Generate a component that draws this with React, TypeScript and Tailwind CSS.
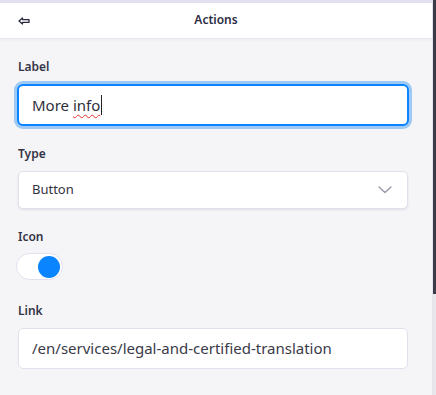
import React from 'react';

function BackArrow() {
  return (
    <svg width="12" height="8" viewBox="0 0 12 8" fill="none">
      <path
        d="M1 4 L4.5 1 V2.6 H11 V5.4 H4.5 V7 Z"
        stroke="#2b2b40"
        strokeWidth="1.3"
        strokeLinejoin="round"
        fill="white"
      />
    </svg>
  );
}

function Chevron() {
  return (
    <svg width="14" height="8" viewBox="0 0 14 8" fill="none">
      <path d="M1 1 L7 6.5 L13 1" stroke="#9a99a8" strokeWidth="1.4" strokeLinecap="round" strokeLinejoin="round" />
    </svg>
  );
}

function Field({ label, children }: { label: string; children: React.ReactNode }) {
  return (
    <div className="flex flex-col">
      <span className="text-[12px] font-semibold text-[#343446] leading-5 mb-[7px]">{label}</span>
      {children}
    </div>
  );
}

export default function App() {
  return (
    <div
      className="w-[436px] h-[395px] flex bg-[#f5f5f8] overflow-hidden"
      style={{ fontFamily: '"Noto Sans", "Open Sans", sans-serif' }}
    >
      <div className="w-[433px] flex flex-col border-r border-[#e6e5ee]">
        <div className="h-[3px] bg-[#e2e0ef]" />
        <div className="h-[36px] bg-white flex items-center relative border-b border-[#e9e8f0] shadow-[0_1px_2px_rgba(0,0,0,0.04)]">
          <div className="absolute left-[18px] top-[14px]">
            <BackArrow />
          </div>
          <span className="flex-1 text-center text-[12px] font-semibold text-[#2c2c42] -mt-[1px]">Actions</span>
        </div>
        <div className="flex flex-col pl-[18px] pr-[24px] pt-[18px]">
          <Field label="Label">
            <div className="h-[42px] -mx-[1px] rounded-[6px] border-2 border-[#0a84ff] bg-white ring-[3px] ring-[#9ec9f5] flex items-center px-[13px]">
              <span className="text-[15px] text-[#2f2f3c]">
                More{' '}
                <span className="underline decoration-wavy decoration-[#e0302a] decoration-1 underline-offset-[3px]">info</span>
              </span>
              <span className="w-px h-[20px] bg-[#222] ml-[1px]" />
            </div>
          </Field>
          <div className="h-[18px]" />
          <Field label="Type">
            <div className="h-[38px] rounded-[5px] border border-[#e2e0ec] bg-white shadow-[0_1px_2px_rgba(60,60,90,0.12)] flex items-center justify-between pl-[13px] pr-[15px]">
              <span className="text-[13px] text-[#33333f]">Button</span>
              <Chevron />
            </div>
          </Field>
          <div className="h-[18px]" />
          <Field label="Icon">
            <div className="w-[47px] h-[27px] -ml-[2px] -mt-[1px] rounded-full bg-white border border-[#e2e0ef] flex items-center justify-end pr-[2px]">
              <div className="w-[22px] h-[22px] rounded-full bg-[#0a84ff]" />
            </div>
          </Field>
          <div className="h-[21px]" />
          <Field label="Link">
            <div className="h-[41px] rounded-[5px] border border-[#e2e0ec] bg-white flex items-center px-[13px]">
              <span className="text-[15px] text-[#3a3a48]">/en/services/legal-and-certified-translation</span>
            </div>
          </Field>
        </div>
      </div>
      <div className="w-[3px] flex flex-col">
        <div className="h-[294px] bg-[#3b3b48]" />
        <div className="flex-1 bg-[#e8e8ec]" />
      </div>
    </div>
  );
}
